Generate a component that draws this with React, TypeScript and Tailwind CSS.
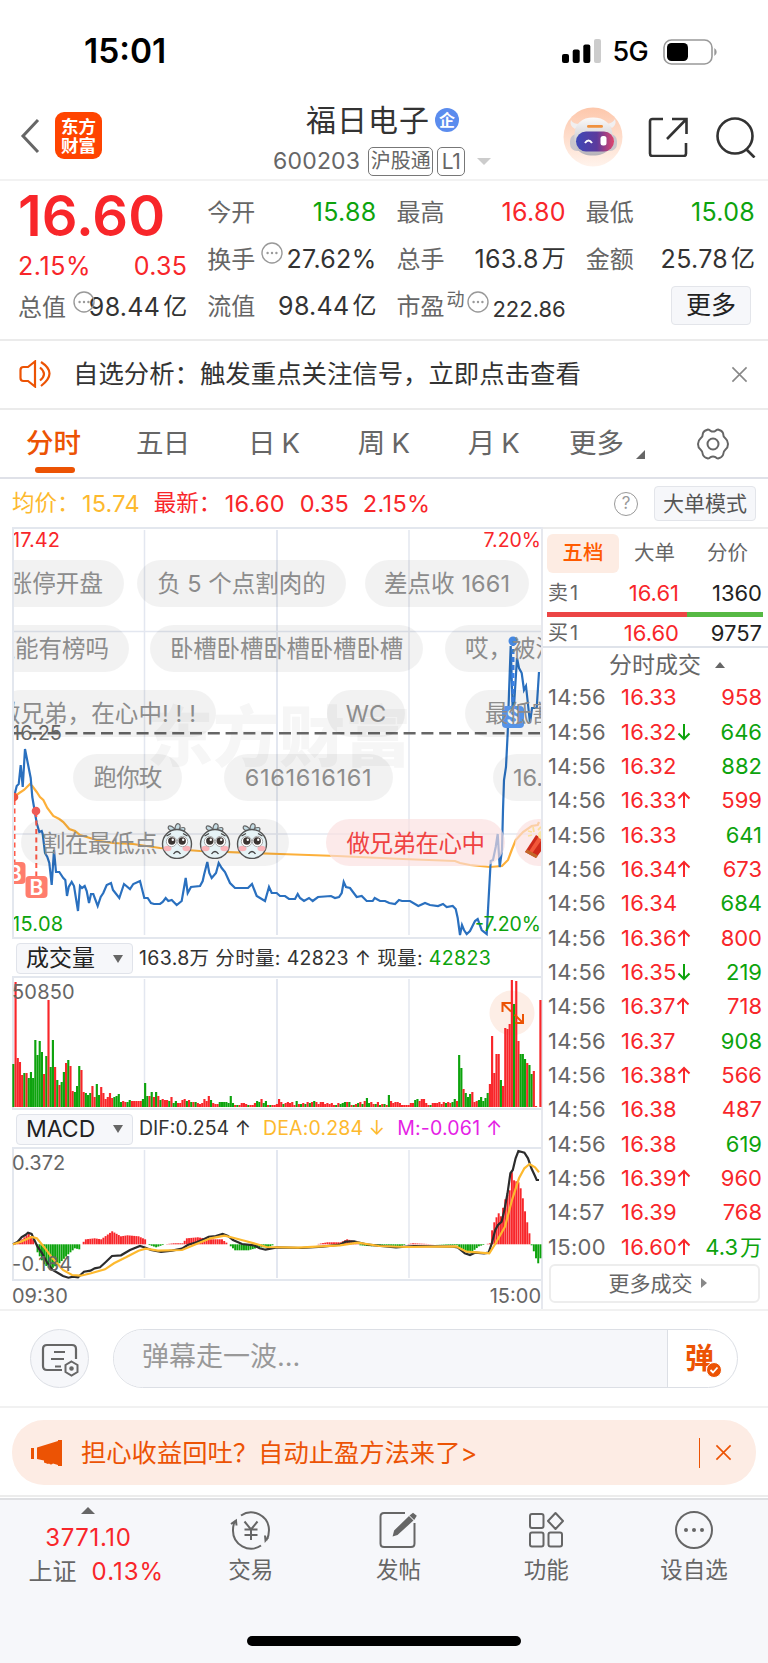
import type { ReactNode } from "react";

const tabs = ["五日", "日 K", "周 K", "月 K"];

const trades = [
  { time: "14:56", price: "16.33", dir: "", vol: "958", buy: true },
  { time: "14:56", price: "16.32", dir: "down", vol: "646", buy: false },
  { time: "14:56", price: "16.32", dir: "", vol: "882", buy: false },
  { time: "14:56", price: "16.33", dir: "up", vol: "599", buy: true },
  { time: "14:56", price: "16.33", dir: "", vol: "641", buy: false },
  { time: "14:56", price: "16.34", dir: "up", vol: "673", buy: true },
  { time: "14:56", price: "16.34", dir: "", vol: "684", buy: false },
  { time: "14:56", price: "16.36", dir: "up", vol: "800", buy: true },
  { time: "14:56", price: "16.35", dir: "down", vol: "219", buy: false },
  { time: "14:56", price: "16.37", dir: "up", vol: "718", buy: true },
  { time: "14:56", price: "16.37", dir: "", vol: "908", buy: false },
  { time: "14:56", price: "16.38", dir: "up", vol: "566", buy: true },
  { time: "14:56", price: "16.38", dir: "", vol: "487", buy: true },
  { time: "14:56", price: "16.38", dir: "", vol: "619", buy: false },
  { time: "14:56", price: "16.39", dir: "up", vol: "960", buy: true },
  { time: "14:57", price: "16.39", dir: "", vol: "768", buy: true },
  { time: "15:00", price: "16.60", dir: "up", vol: "4.3", unit: "万", buy: false },
];

const priceLine =
  "14,797 16.7,786 18.7,784 20.7,765 22.7,787 25,749 30.7,778 32.3,797 36.7,823 39.3,832 41.7,831 42.7,834 45,853 47.3,857 49.3,863 51.7,885 54,850 56,872 59.3,872 63.3,878 65.3,880 67,896 68.7,887 71.7,882 74,886 78,911 80,886 82,888 84.7,886 86.7,891 89,903 91,894 93.3,894 97.7,906 100.7,897 103.3,893 106.7,885 111,883 113,890 119.3,898 124,884 130,889 133.3,884 140,881 144.3,898 147.7,898 151,903 154,904 157,904 160,904 162.7,902 165.7,898 168.3,901 171.7,900 176.7,905 181.7,901 185.7,878 187.7,893 191,887 200,886 202.7,881 204,875 207.3,862 209.3,873 211.7,878 216,873 218.7,863 221.7,868 225,872 230,883 235,888 248,888 252,884 256.7,896 265,901 269,887 271.7,893 276.7,893 280,896 285,896 289,899 295,899 297.7,894 300,898 304,901 309,898 312.7,901 318,897 331,896 335,898 339,897 341.7,893 343.7,882 346,887 350,888 356.7,897 361.7,896 366.7,901 372.7,901 374.7,898 380,901 385,901 389.3,903 395,904 399,900 402,901 410,901 418.3,906 425,903 430,905 438,906 443,904 446.7,907 452.7,906 455.7,909 457.7,918 460,935 462,925 464,930 466.7,934 470,931 475,921 477.7,919 481.7,930 486.7,934 488,910 490.7,861 493,860 495.7,847 497.7,834 499.7,867 502,850 503,810 504,780 506,767 507.7,733 509,693 510.7,646 512.7,710 514,706 517,658 519,668 521.7,673 524,690 526,686 530,723 532,708 536.7,708 539,672";

const avgLine =
  "14,797 19.3,793 24,790 30,784 32.3,786 36.7,792 40,797 43.3,800 47.3,808 53.3,816 59.3,819 63.3,822 69.3,829 75,831 80,835 90,838 100,841 113,843 133,844 160,848 200,851 280,854 337,856 403,859 455,861 460,863 470,865 490,867 502,866 508,860 511.7,850 515.7,840 523,832 531.7,826 537.7,825 539,822";

// one entry per minute, positive is a red bar and negative a green one
const volumes = [
  -43, 125, 49, 45, 32, -34, 34, -29, -35, -29, -67, -52, -66, -55, 33, -51, 107, -40, -67, 40, -27, 22, -25,
  -35, 44, -47, 41, 16, -15, -21, -41, 37, 15, -14, -12, -14, 21, 10, -23, -12, 20, 14, 8, 10, 14, 9, -10, -11,
  -13, -5, 6, 5, -5, -7, 6, 6, 6, 6, 6, -8, -24, -11, 11, -15, 10, -15, 11, -7, 8, 7, 7, -6, 10, -4, -6, 4, 4,
  7, 8, -6, 7, -5, 5, -5, 4, 3, 4, 8, 6, 11, -7, 4, 3, 3, -5, -5, -5, -5, -4, -11, -4, 2, -2, 2, 4, 4, 3, -2, 2,
  2, 4, -6, -5, 8, -4, -6, 2, -2, 2, 2, 3, 8, 5, -3, 4, 5, 4, 5, 2, -6, 3, -3, 4, -3, 5, -4, 5, -6, 5, 3, 5, 5,
  3, 4, 3, 4, 2, -2, 4, -3, -4, -5, 5, -5, 2, -2, 3, -4, 5, -3, 6, -9, -4, 5, 3, -3, 5, -2, 3, -3, 2, -12, 6, 4,
  5, 5, 4, 2, 2, 2, 2, 4, 4, -7, -8, 6, 8, 8, 4, 2, -2, 4, 4, 4, 5, 3, 5, -4, 5, 4, -5, -8, 6, -52, -39, 18,
  -14, -10, -13, 15, 5, 6, -7, -10, -6, -9, -14, 23, 71, 34, 53, 53, -27, 21, 79, 78, 83, 127, -103, 126, 66,
  -53, -53, -48, 44, -42, -33, 36, 1, 0, 107,
];

const histogramPoints = [
  [0, 0], [4, 5], [7, 11], [9, 5], [10, 0], [11, -8], [14, -20], [17, -25], [21, -19], [25, -10], [28, -4],
  [30, -5], [31, 0], [33, 5], [37, 6], [40, 5], [45, 13], [49, 8], [52, 9], [57, 8], [60, 5], [61, 0], [65, -3],
  [69, 0], [73, 1], [77, 1], [79, 6], [84, 7], [90, 5], [95, 5], [98, 0], [101, -6], [107, -6], [112, -3],
  [116, -3], [119, 0], [138, 0], [143, 2], [149, 2], [152, 5], [157, 2], [158, -1], [163, -2], [169, -1],
  [176, -2], [179, 0], [182, 1], [202, -1], [204, -5], [208, -9], [212, -2], [215, 0], [217, 1], [218, 14],
  [219, 22], [220, 27], [221, 31], [222, 28], [224, 45], [226, 54], [227, 72], [228, 64], [230, 62], [231, 56],
  [232, 46], [233, 33], [234, 22], [235, 11], [236, -1], [237, -7], [238, -14], [239, -19], [240, -14],
];

const histogram = Array.from({ length: 241 }, (_, i) => {
  const next = Math.max(1, histogramPoints.findIndex(([x]) => x >= i));
  const [x0, y0] = histogramPoints[next - 1];
  const [x1, y1] = histogramPoints[next];
  return y0 + ((y1 - y0) * (i - x0)) / (x1 - x0);
});

const difLine =
  "13,1244.3 17.5,1242 21.7,1237 25.3,1235 28,1232.7 31.6,1234 34,1239.3 37.5,1246.7 42,1253 47.4,1263 52.6,1270 58,1273 63,1276 68.4,1277.7 73,1276.7 78,1277.3 84,1271.7 90.5,1270.7 94.7,1268.3 100,1267.3 105,1262.7 112,1256 121,1255.3 130,1250 140,1246 145.6,1247.7 151,1250 161,1252 172,1250.7 182,1248.7 187.7,1245 196.4,1242.3 201.7,1240.3 208.7,1236.7 215.7,1236 222.7,1234 228,1236 233,1240 242,1244 254,1245.3 259.6,1248.3 265.5,1249.7 277,1247.3 301.6,1248 322.7,1246.7 340,1244.7 345.5,1241.7 354,1241.3 368,1244.7 396,1247.3 414,1246 452.5,1246.7 457.7,1247.3 464.8,1253.3 470,1255 475,1252.7 484,1253.3 488.6,1252.7 491.8,1243.3 495.3,1230 498,1225 501.6,1221.7 504.4,1210 507.5,1193.3 510.4,1173.3 512.8,1170 515.6,1158.3 518.4,1151 524.4,1152.7 528,1158.3 531.4,1168.3 535,1176 536.7,1180 539,1180";

const deaLine =
  "13,1244.3 21,1241.7 31.6,1237 36.8,1238.3 43.8,1246.7 52.6,1258.3 63,1270 72,1275 80.7,1275.7 91,1273.3 105,1269.3 114,1263.3 126,1257.3 138.5,1250.7 145.6,1248.7 158,1250.7 182,1250 196.4,1244 210.5,1238.3 224.5,1235.7 233,1237.7 245.5,1241 266.6,1247 298,1247.7 340,1245.3 357.8,1242.7 379,1246 407,1247 456,1246.3 466.5,1251.7 477,1252.3 489.3,1253.3 494.6,1245 505,1226.7 512,1200 519,1178.3 524.4,1168.3 529.6,1164 535,1167.3 539,1172.3";

const Grid = ({ top, bottom }: { top: number; bottom: number }) => (
  <g stroke="#e3e7f0" strokeWidth="1.5">
    <path d={`M144.5 ${top}V${bottom}M409 ${top}V${bottom}`} />
    <path d={`M277 ${top}V${bottom}`} strokeWidth="2" />
  </g>
);

const DotsIcon = ({ className }: { className: string }) => (
  <svg viewBox="0 0 22 22" className={className}>
    <circle cx="11" cy="11" r="10" fill="none" stroke="#999" strokeWidth="1.4" />
    <g fill="#999">
      <circle cx="6.6" cy="11" r="1.2" />
      <circle cx="11" cy="11" r="1.2" />
      <circle cx="15.4" cy="11" r="1.2" />
    </g>
  </svg>
);

const CloseIcon = ({ className }: { className: string }) => (
  <svg viewBox="0 0 18 18" className={className} fill="none" stroke="currentColor" strokeWidth="1.7">
    <path d="M1.5 1.5l15 15M16.5 1.5l-15 15" />
  </svg>
);

const TickArrow = ({ dir }: { dir: string }) => (
  <svg
    viewBox="0 0 14 18"
    className={dir === "up" ? "h-[18px] w-3.5 text-[#f8262a]" : "h-[18px] w-3.5 rotate-180 text-[#0da30d]"}
    fill="none"
    stroke="currentColor"
    strokeWidth="2">
    <path d="M7 17V2M1.5 7.5L7 2l5.5 5.5" />
  </svg>
);

type QuoteProps = {
  label: string;
  value: string;
  unit?: string;
  color?: string;
  extra?: ReactNode;
};

const Quote = ({ label, value, unit, color = "text-[#333]", extra }: QuoteProps) => (
  <div className="flex h-[47px] items-center justify-between whitespace-nowrap">
    <span className="flex text-2xl leading-none text-[#666]">
      {label}
      {extra}
    </span>
    <span className={`flex text-[25px] leading-none tracking-[0.3px] ${color}`}>
      {value}
      {unit && <span className="ml-[3px] text-2xl leading-none tracking-normal">{unit}</span>}
    </span>
  </div>
);

const pill = "absolute flex h-[47px] items-center whitespace-nowrap rounded-full text-[23.5px] leading-none";
const grayPill = `${pill} bg-black/5 text-[#8c8c8c]`;

const SadFace = () => (
  <svg viewBox="0 0 32 36" className="h-9 w-8">
    <path d="M14 9c-6-1-8-4-6-6 2-1 4 1 6 3 0-4 2-6 4-5s1 4 0 5c3-2 6-2 6 0s-3 3-6 3z" fill="#c4dce4" stroke="#666" strokeWidth="1.2" />
    <circle cx="16" cy="21" r="14.5" fill="#e6f3f6" stroke="#555" strokeWidth="1.4" />
    <ellipse cx="6.5" cy="25.5" rx="4" ry="2.8" fill="#fbb4b9" />
    <ellipse cx="25.5" cy="25.5" rx="4" ry="2.8" fill="#fbb4b9" />
    <circle cx="10.5" cy="18.5" r="5.2" fill="#fff" stroke="#888" strokeWidth="0.7" />
    <circle cx="21.5" cy="18.5" r="5.2" fill="#fff" stroke="#888" strokeWidth="0.7" />
    <circle cx="10.8" cy="18" r="3.7" fill="#3a3431" />
    <circle cx="21.2" cy="18" r="3.7" fill="#3a3431" />
    <circle cx="11.8" cy="16.8" r="1.2" fill="#fff" />
    <circle cx="22.2" cy="16.8" r="1.2" fill="#fff" />
    <path d="M5.5 13l4.5-2.5M26.5 13L22 10.5M12.500 31q3.500-5 7 0" fill="none" stroke="#444" strokeWidth="1.3" />
  </svg>
);

const StatusBar = () => (
  <div className="flex h-[100px] items-center justify-between pl-[84px] pr-[51px] pt-[3px]">
    <span className="text-[33.5px] font-semibold leading-none text-black">15:01</span>
    <div className="flex items-center">
      <svg viewBox="0 0 39 25" className="mr-3 h-[25px] w-[39px]">
        <rect x="0" y="15" width="7" height="9" rx="2" />
        <rect x="10.7" y="10.5" width="7" height="13.5" rx="2" />
        <rect x="21.3" y="5.5" width="7" height="18.5" rx="2" />
        <rect x="32" y="0" width="7" height="24" rx="2" fill="#ccc" />
      </svg>
      <span className="mr-[15px] text-[27px] font-medium leading-none tracking-[-0.7px] text-black">5G</span>
      <svg viewBox="0 0 54 26" className="h-[26px] w-[54px]">
        <rect x="1" y="1" width="48" height="24" rx="7.5" fill="none" stroke="#999" strokeWidth="1.6" />
        <rect x="4" y="4" width="21" height="18" rx="4.5" />
        <path d="M51.3 9q2.4 1.4 2.4 4t-2.4 4z" fill="#999" />
      </svg>
    </div>
  </div>
);

const Robot = () => (
  <svg viewBox="0 0 60 60" className="h-[60px] w-[60px]">
    <defs>
      <linearGradient id="halo" x1="0" y1="0" x2="0" y2="1">
        <stop offset="0" stopColor="#fdc7ab" />
        <stop offset="1" stopColor="#fff3ec" />
      </linearGradient>
      <linearGradient id="visor" x1="0" y1="0" x2="1" y2="0">
        <stop offset="0" stopColor="#3d48b8" />
        <stop offset="0.55" stopColor="#5c3a9c" />
        <stop offset="1" stopColor="#e0446c" />
      </linearGradient>
      <linearGradient id="shell" x1="0" y1="0" x2="0" y2="1">
        <stop offset="0" stopColor="#fbfafa" />
        <stop offset="1" stopColor="#b5b2b9" />
      </linearGradient>
    </defs>
    <circle cx="30" cy="30" r="29.5" fill="url(#halo)" />
    <path d="M12 22q-6-3-4-9 2 4 8 4zM49 21q5-3 3-9-2 4-8 5z" fill="#f1eff0" />
    <rect x="7" y="27" width="47" height="17" rx="7" fill="#c9c6cc" />
    <path d="M30 10.5c-11 0-18 6-18.500 17-1 13 4 21 18.500 21s20-8 19.500-21c-.5-11-8.500-17-19.500-17z" fill="url(#shell)" />
    <rect x="24" y="18" width="16" height="2.8" rx="1.4" fill="#f0913e" />
    <rect x="13" y="24.5" width="38" height="20" rx="10" fill="url(#visor)" />
    <path d="M22 36q3.500-5 7 0" fill="none" stroke="#fff" strokeWidth="2" />
    <rect x="37.5" y="29" width="6" height="9.5" rx="2.5" fill="#fff" />
  </svg>
);

const Header = () => (
  <div className="flex h-[81px] items-center border-b-2 border-[#f2f2f2] pl-5 pr-[11px]">
    <svg viewBox="0 0 20 36" className="-mt-[7px] h-9 w-5" fill="none" stroke="#666" strokeWidth="3">
      <path d="M18 2L3 18l15 16" />
    </svg>
    <div className="-mt-2 ml-[15px] flex h-[47px] w-[47px] flex-col items-center justify-center rounded-[9px] bg-[#ff4400] text-[17.5px] font-bold leading-[19px] text-white">
      <span>东方</span>
      <span>财富</span>
    </div>
    <div className="ml-[171px] w-[218px]">
      <div className="-mt-[3px] flex items-center pl-[33px]">
        <span className="text-[30px] leading-[38px] tracking-[1px] text-[#333]">福日电子</span>
        <span className="ml-[5px] flex h-6 w-6 items-center justify-center rounded-full bg-[#5b8cee] text-[16px] font-bold leading-none text-white">
          企
        </span>
      </div>
      <div className="mt-2 flex items-center text-[#666]">
        <span className="text-[23px] leading-none tracking-[0.2px]">600203</span>
        <span className="ml-2 flex h-[29px] w-[65px] items-center justify-center rounded-[5px] border-[1.5px] border-[#777] text-[20px] leading-none">
          沪股通
        </span>
        <span className="ml-1 flex h-[29px] w-7 items-center justify-center rounded-[5px] border-[1.5px] border-[#777] text-[21px] leading-none tracking-[-0.5px]">
          L1
        </span>
        <span className="ml-3 border-x-[7px] border-t-[7px] border-x-transparent border-t-[#ccc]" />
      </div>
    </div>
    <div className="-mt-1.5 ml-auto flex items-center">
      <Robot />
      <svg viewBox="0 0 40 40" className="ml-[25px] h-10 w-10" fill="none" stroke="#333" strokeWidth="2.6">
        <path d="M15 2H4.500Q2 2 2 4.500v32Q2 39 4.500 39h31q2.500 0 2.500-2.500V26M24 2h14.500v15M38 2.500L19 22" />
      </svg>
      <svg viewBox="0 0 42 42" className="ml-[27px] h-[42px] w-[42px]" fill="none" stroke="#333" strokeWidth="2.6">
        <circle cx="20" cy="20" r="17.5" />
        <path d="M31.500 33.500l8 8" />
      </svg>
    </div>
  </div>
);

const Quotes = () => (
  <div className="grid h-[160px] grid-cols-4 gap-x-5 border-b-2 border-[#ebebeb] pl-[18px] pr-[13px] pt-2">
    <div>
      <div className="flex h-[54px] items-center text-[56px] font-semibold leading-none tracking-[0.1px] text-[#f8262a]">16.60</div>
      <div className="flex h-[47px] items-center justify-between text-[25px] leading-none text-[#f8262a]">
        <span className="tracking-[0.6px]">2.15%</span>
        <span className="tracking-[0.3px]">0.35</span>
      </div>
      <div className="relative -mt-1.5">
        <DotsIcon className="absolute left-[55px] top-[7px] h-[22px] w-[22px]" />
        <Quote label="总值" value="98.44" unit="亿" />
      </div>
    </div>
    <div>
      <Quote label="今开" value="15.88" color="text-[#0da30d]" />
      <Quote label="换手" value="27.62%" extra={<DotsIcon className="-mt-1.5 ml-1.5 h-[22px] w-[22px]" />} />
      <Quote label="流值" value="98.44" unit="亿" />
    </div>
    <div>
      <Quote label="最高" value="16.80" color="text-[#f8262a]" />
      <Quote label="总手" value="163.8" unit="万" />
      <div className="flex h-[47px] items-center justify-between text-[#333]">
        <span className="flex text-2xl leading-none text-[#666]">
          市盈
          <span className="-mt-1 ml-0.5 text-[18px] leading-none">动</span>
          <DotsIcon className="-mt-1 ml-0.5 h-[22px] w-[22px]" />
        </span>
        <span className="mt-1 text-[22px] leading-none">222.86</span>
      </div>
    </div>
    <div>
      <Quote label="最低" value="15.08" color="text-[#0da30d]" />
      <Quote label="金额" value="25.78" unit="亿" />
      <div className="flex h-[45px] items-center justify-end pr-1">
        <span className="flex h-[39px] w-20 items-center justify-center rounded border-[1.5px] border-[#e3e5ea] bg-[#f6f7fa] text-[25px] leading-none text-[#222]">
          更多
        </span>
      </div>
    </div>
  </div>
);

const Notice = () => (
  <div className="flex h-[69px] items-center border-b-2 border-[#ebebeb] pb-px pl-[19px] pr-5">
    <svg viewBox="0 0 34 28" className="h-7 w-[34px]" fill="none" stroke="#ec5304" strokeWidth="2.2">
      <path d="M16 1.500v25l-7-5.500H4.500Q1.500 21 1.500 18v-8Q1.500 7 4.500 7H9zM21 7.500q8 6.500 0 13M22 2q17 11 0 24" />
    </svg>
    <span className="ml-5 text-[25.4px] leading-none text-[#333]">自选分析：触发重点关注信号，立即点击查看</span>
    <CloseIcon className="ml-auto h-[17px] w-[17px] text-[#888]" />
  </div>
);

const TabBar = () => (
  <div className="flex h-[69px] items-center border-b-2 border-[#dfe1e8] pl-[26px] pt-px text-[27.5px] leading-none text-[#666]">
    <div className="relative font-medium text-[#ec5304]">
      分时
      <span className="absolute -bottom-[15px] left-[9px] h-1.5 w-10 rounded-full bg-[#ec5304]" />
    </div>
    <div className="ml-[55px] flex w-[383px] justify-between">
      {tabs.map((tab) => (
        <span key={tab} className="whitespace-nowrap tracking-[-0.8px]">
          {tab}
        </span>
      ))}
    </div>
    <span className="ml-[50px]">更多</span>
    <span className="ml-3 mt-5 border-b-[9px] border-l-[9px] border-b-[#666] border-l-transparent" />
    <svg viewBox="0 0 34 34" className="ml-[51px] h-[34px] w-[34px]" fill="none" stroke="#666" strokeWidth="2">
      <circle cx="17" cy="17" r="5.5" />
      <path
        d="M12 2.500q1.500 0 2.500 1.300 2.500 1.400 5 0Q20.500 2.500 22 2.500q4 1 5 3.500 0 3.500 2.500 5.500Q32 13.500 32 17t-2.500 5.500Q27 24.500 27 28q-1 2.500-5 3.500-1.500 0-2.500-1.300-2.500-1.400-5 0-1 1.300-2.500 1.300-4-1-5-3.500 0-3.500-2.500-5.500Q2 20.500 2 17t2.500-5.500Q7 9.500 7 6q1-2.500 5-3.500z"
        strokeLinejoin="round"
      />
    </svg>
  </div>
);

const PriceSummary = () => (
  <div className="flex h-12 items-center whitespace-nowrap px-3 pt-px text-[22.5px] leading-none text-[#f8262a]">
    <span className="flex items-center text-[#fdb92e]">
      <span className="w-[70px]">均价：</span>
      <span className="text-[23.5px] tracking-[0.2px]">15.74</span>
    </span>
    <span className="ml-3.5 w-[71px]">最新：</span>
    <span className="text-[23.5px] tracking-[0.2px]">16.60</span>
    <span className="ml-[15px] text-[23.5px]">0.35</span>
    <span className="ml-3.5 text-[23.5px] tracking-[0.3px]">2.15%</span>
    <span className="ml-auto flex h-6 w-6 items-center justify-center rounded-full border-[1.5px] border-[#999] text-[17px] text-[#999]">?</span>
    <span className="ml-4 flex h-[35px] w-[102px] items-center justify-center rounded border-[1.5px] border-[#e3e5ea] bg-[#f6f7fa] text-[21px] text-[#555]">
      大单模式
    </span>
  </div>
);

const PriceChart = () => (
  <div className="relative h-[412px] overflow-hidden border-b-2 border-l-2 border-t-2 border-[#e3e7ee]">
    <svg viewBox="14 529 528 408" className="absolute left-0 top-0 h-[408px] w-[528px] max-w-none">
      <text x="147" y="761" fontSize="66" fontWeight="900" fill="#f6f6f6">
        东方财富
      </text>
      <Grid top={530} bottom={935} />
      <path d="M12 631.500H542M12 834H542" stroke="#e3e7f0" strokeWidth="1.5" />
      <path d="M12 733.300H540" stroke="#666" strokeWidth="2.4" strokeDasharray="12 5.8" />
      <polyline points={avgLine} fill="none" stroke="#fdb03a" strokeWidth="2.2" />
      <polyline points={priceLine} fill="none" stroke="#2a70bf" strokeWidth="2.2" />
      <g stroke="#ff5a48" strokeWidth="2" strokeDasharray="5 3.5">
        <path d="M14.500 800V862M36.300 812V876" />
      </g>
      <circle cx="14" cy="797" r="4.3" fill="#f0563f" />
      <circle cx="36" cy="811" r="4.3" fill="#ef5b57" />
      <rect x="3.5" y="862" width="22" height="22" rx="4" fill="#ff7d6d" />
      <rect x="25.5" y="876" width="22" height="22" rx="4" fill="#ff7d6d" />
      <g fill="#fff" fontSize="21" fontWeight="600" textAnchor="middle">
        <text x="15" y="880.5">B</text>
        <text x="36.5" y="894.5">B</text>
      </g>
      <path d="M513 641V706" stroke="#3b82e6" strokeWidth="3" strokeDasharray="5 3" />
      <circle cx="513" cy="641" r="4.5" fill="#4a90ee" />
      <rect x="502" y="706" width="22" height="22" rx="4" fill="#5a9bf5" />
      <text x="513" y="724" fill="#fff" fontSize="20" fontWeight="600" textAnchor="middle">
        S
      </text>
    </svg>

    <span className={`${grayPill} right-[417px] top-[31px] pr-[21px] tracking-[0.1px]`}>打涨停开盘</span>
    <span className={`${grayPill} left-[123px] top-[31px] w-[209px] justify-center`}>负 5 个点割肉的</span>
    <span className={`${grayPill} left-[351px] top-[31px] w-[164px] justify-center tracking-[0.1px]`}>差点收 1661</span>

    <span className={`${grayPill} right-[412px] top-24 pr-5`}>还能有榜吗</span>
    <span className={`${grayPill} left-[136px] top-24 w-[273px] justify-center tracking-[-0.2px]`}>卧槽卧槽卧槽卧槽卧槽</span>
    <span className={`${grayPill} left-[431px] top-24 px-5`}>哎，被没了</span>

    <span className={`${grayPill} right-[325px] top-[161px] pr-5 tracking-[0.1px]`}>做兄弟，在心中! ! !</span>
    <span className={`${grayPill} left-[313px] top-[161px] w-[78px] justify-center`}>WC</span>
    <span className={`${grayPill} left-[451px] top-[161px] px-5`}>最低割了</span>

    <span className={`${grayPill} left-[59px] top-[225px] w-[109px] justify-center tracking-[-0.8px]`}>跑你玫</span>
    <span className={`${grayPill} left-[210px] top-[225px] w-[169px] justify-center tracking-[0.7px]`}>6161616161</span>
    <span className={`${grayPill} left-[479px] top-[225px] px-5`}>16.60</span>

    <span className={`${grayPill} left-[7px] top-[290px] w-[268px] pl-[21px] pt-0.5 tracking-[-0.5px]`}>
      割在最低点
      <span className="-mt-1.5 ml-1 flex gap-[5.5px]">
        <SadFace />
        <SadFace />
        <SadFace />
      </span>
    </span>
    <span className={`${pill} left-[312px] top-[290px] w-[179px] justify-center bg-[#fbdede]/65 pt-0.5 tracking-[-0.5px] text-[#ef4343]`}>
      做兄弟在心中
    </span>
    <span className={`${pill} left-[501px] top-[290px] w-20 bg-[#fbdede]/65`}>
      <svg viewBox="0 0 30 40" className="ml-2 h-10 w-[30px]">
        <path d="M5 8l4 1M10 4l1 5M5 13l4-1M15 7l3-3" stroke="#fbdf9a" strokeWidth="1.8" />
        <path d="M13 12l12 7-12 16-11-6z" fill="#cf2a1a" />
        <path d="M16 13l4 2-12 17-3-2z" fill="#f2583a" />
        <path d="M4 26.500l11 6-2 2.500-11-6z" fill="#c2682a" />
        <circle cx="19" cy="12" r="4" fill="#fbe6a4" />
      </svg>
    </span>

    <span className="absolute -left-0.5 top-px text-[20px] leading-[20px] text-[#f8262a]">17.42</span>
    <span className="absolute right-0 top-px text-[19.5px] leading-[20px] text-[#f8262a]">7.20%</span>
    <span className="absolute -left-0.5 top-[194px] text-[20px] leading-[20px] text-[#666]">16.25</span>
    <span className="absolute -left-0.5 bottom-[3px] text-[20px] leading-[20px] tracking-[0.3px] text-[#0da30d]">15.08</span>
    <span className="absolute bottom-[3px] right-0 text-[19.5px] leading-[20px] text-[#0da30d]">-7.20%</span>
  </div>
);

const IndicatorSelect = ({ name }: { name: string }) => (
  <span className="ml-1 mr-1.5 flex h-[31px] w-[117px] items-center justify-between rounded border-[1.5px] border-[#e0e3ea] bg-[#f6f7fa] pl-[9px] pr-[9px] text-[23px] leading-none tracking-normal text-[#222]">
    {name}
    <span className="border-x-[5px] border-t-8 border-x-transparent border-t-[#666]" />
  </span>
);

const VolumeChart = () => (
  <>
    <div className="flex h-[37px] items-center whitespace-nowrap pt-0.5 text-[19.5px] leading-none tracking-[0.35px] text-[#333]">
      <IndicatorSelect name="成交量" />
      <span>163.8万 分时量: 42823 ↑ 现量:</span>
      <span className="ml-1.5 text-[#0da30d]">42823</span>
    </div>
    <div className="relative h-[134px] border-y-2 border-l-2 border-[#e3e7ee]">
      <svg viewBox="14 978 528 130" className="h-[130px] w-[528px] max-w-none overflow-visible">
        <Grid top={979} bottom={1107} />
        <circle cx="512" cy="1013" r="22.5" fill="#fdeee6" />
        {volumes.map((v, i) => (
          <rect
            key={i}
            x={12.3 + i * 2.196}
            y={1107 - Math.abs(v)}
            width="2.15"
            height={Math.abs(v)}
            fill={v > 0 ? "#f8262a" : "#0da30d"}
          />
        ))}
        <path d="M502.500 1012V1003H511M503 1003.500l8 8M515 1023h8V1014M522.500 1022.500l-8-8" fill="none" stroke="#ec5304" strokeWidth="2" />
      </svg>
      <span className="absolute -left-0.5 top-1 text-[20px] leading-[20px] tracking-[0.2px] text-[#666]">50850</span>
    </div>
  </>
);

const MacdChart = () => (
  <>
    <div className="flex h-[37px] items-center whitespace-nowrap pt-px text-[19.5px] leading-none text-[#333]">
      <IndicatorSelect name="MACD" />
      <span>DIF:0.254 ↑</span>
      <span className="ml-3 tracking-[0.15px] text-[#fdb92e]">DEA:0.284 ↓</span>
      <span className="ml-3 tracking-[0.2px] text-[#e51fe5]">M:-0.061 ↑</span>
    </div>
    <div className="relative h-[134px] border-y-2 border-l-2 border-[#e3e7ee]">
      <svg viewBox="14 1149 528 130" className="h-[130px] w-[528px] max-w-none overflow-visible">
        <Grid top={1150} bottom={1278} />
        {histogram.map((v, i) => (
          <rect
            key={i}
            x={12.4 + i * 2.196}
            y={v > 0 ? 1244.3 - v : 1244.3}
            width="1.95"
            height={Math.abs(v)}
            fill={v > 0 ? "#f8262a" : "#0da30d"}
          />
        ))}
        <polyline points={difLine} fill="none" stroke="#2c2c2c" strokeWidth="2.2" />
        <polyline points={deaLine} fill="none" stroke="#fdb92e" strokeWidth="2.2" />
      </svg>
      <span className="absolute -left-0.5 top-1 text-[20px] leading-[20px] text-[#666]">0.372</span>
      <span className="absolute -left-0.5 bottom-[5px] text-[20px] leading-[20px] tracking-[0.3px] text-[#666]">-0.184</span>
    </div>
    <div className="flex h-7 items-center justify-between pt-0.5 text-[20px] leading-none text-[#666]">
      <span>09:30</span>
      <span>15:00</span>
    </div>
  </>
);

const OrderBook = () => (
  <div className="w-[227px] border-l-2 border-[#e6e8ee] text-[#666]">
    <div className="flex h-12 items-center border-t-2 border-[#ececec] pb-0.5 pl-1 pt-1 text-[20.5px] leading-none">
      <span className="flex h-[39px] w-[72px] items-center justify-center rounded-md bg-[#fdece3] font-medium text-[#ff5a00]">五档</span>
      <span className="ml-[15px]">大单</span>
      <span className="ml-8">分价</span>
    </div>
    <div className="flex h-9 items-center pl-[5px] pr-1.5 text-[22px] leading-none">
      <span className="w-11 text-[20px] tracking-[2px]">卖1</span>
      <span className="w-[87px] text-right text-[#f8262a]">16.61</span>
      <span className="ml-auto text-[#222]">1360</span>
    </div>
    <div className="ml-1 mr-[5px] mt-px flex h-[5px] bg-[#56b944]">
      <span className="w-[140px] bg-[#ec4545]" />
    </div>
    <div className="flex h-[31px] items-center border-b-2 border-[#dfe3ea] pl-[5px] pr-1.5 pt-0.5 text-[22px] leading-none">
      <span className="w-11 text-[20px] tracking-[2px]">买1</span>
      <span className="w-[87px] text-right text-[#f8262a]">16.60</span>
      <span className="ml-auto text-[#222]">9757</span>
    </div>
    <div className="flex h-8 items-center pl-[66px] pt-0.5 text-[23px] leading-none">
      分时成交
      <span className="ml-3.5 border-x-[5.5px] border-b-[6px] border-x-transparent border-b-[#666]" />
    </div>
    {trades.map((trade, i) => (
      <div key={i} className="flex h-[34.35px] items-center pl-[5px] pr-1.5 text-[22px] leading-none">
        <span className="w-[73px] tracking-[0.3px]">{trade.time}</span>
        <span className="tracking-[0.2px] text-[#f8262a]">{trade.price}</span>
        {trade.dir && <TickArrow dir={trade.dir} />}
        <span className={trade.buy ? "ml-auto text-[#f8262a]" : "ml-auto text-[#0da30d]"}>
          {trade.vol}
          {trade.unit && <span className="ml-0.5">{trade.unit}</span>}
        </span>
      </div>
    ))}
    <div className="ml-1.5 mr-2 flex h-[39px] items-center justify-center rounded-md border-2 border-[#ededed] pl-1.5 text-[21px] leading-none">
      更多成交
      <span className="ml-2 border-y-[5.5px] border-l-[6px] border-y-transparent border-l-[#888]" />
    </div>
  </div>
);

const CommentBar = () => (
  <div className="flex h-[99px] items-center border-b-2 border-t-2 border-[#f1f1f1] px-[30px]">
    <span className="flex h-[59px] w-[59px] items-center justify-center rounded-full border-[1.5px] border-[#dcdfe5] bg-[#f6f7fa]">
      <svg viewBox="0 0 38 36" className="h-9 w-[38px]" fill="none" stroke="#666" strokeWidth="2.2">
        <path d="M21 29H6q-4 0-4-4V8q0-4 4-4h25q4 0 4 4v10M13 11h11M10 18h13M14 25.500h6" />
        <path d="M30.500 20.500l6 3.500v7l-6 3.500-6-3.500v-7z" strokeWidth="2" />
        <circle cx="30.5" cy="27.5" r="1.2" fill="#666" />
      </svg>
    </span>
    <div className="ml-6 flex h-[59px] flex-1 overflow-hidden rounded-full border-[1.5px] border-[#dcdfe5]">
      <div className="flex flex-1 items-center bg-[#f6f7fa] pb-1 pl-7 text-[27px] leading-none text-[#999]">弹幕走一波...</div>
      <div className="flex w-[70px] items-center border-l-[1.5px] border-[#dcdfe5] pl-[17px] text-[29px] font-bold leading-none text-[#ec5304]">
        弹
        <svg viewBox="0 0 16 16" className="-ml-2 mt-[22px] h-4 w-4">
          <circle cx="8" cy="8" r="7.5" fill="#ec5304" stroke="#fff" />
          <path d="M4.500 8l2.500 2.500 4.500-5" fill="none" stroke="#fff" strokeWidth="1.8" />
        </svg>
      </div>
    </div>
  </div>
);

const Promo = () => (
  <div className="mb-px h-[89px] border-b-2 border-[#ececec] px-3 pt-3">
    <div className="flex h-[65px] items-center rounded-[32px] bg-[#fdece4] pl-[19px] pr-6 text-[#ec5304]">
      <svg viewBox="0 0 32 26" className="h-[26px] w-8" fill="#ec5304">
        <path d="M0 8h3v11H0zM6 7.500L27 1V0h4v26h-4v-1l-5-1.500q-2 2-4 0l-1 .5-4-1.500v-2L6 19z" />
      </svg>
      <span className="ml-[18px] text-[25.3px] leading-none">担心收益回吐？自动止盈方法来了&gt;</span>
      <span className="ml-auto mr-[15px] h-[30px] w-[1.5px] bg-[#ec5304]" />
      <CloseIcon className="h-[17px] w-[17px]" />
    </div>
  </div>
);

const NavItem = ({ label, children }: { label: string; children: ReactNode }) => (
  <div className="flex w-[148px] flex-col items-center pt-2.5">
    <svg viewBox="0 0 42 40" className="h-10 w-[42px]" fill="none" stroke="#666" strokeWidth="2">
      {children}
    </svg>
    <span className="mt-[9px] text-[22.5px] leading-[22px] text-[#666]">{label}</span>
  </div>
);

const BottomNav = () => (
  <div className="h-[165px] border-t-2 border-[#dfe0e3] bg-[#f6f7fa]">
    <div className="flex h-[136px]">
      <div className="flex w-[177px] flex-col items-center pt-[7px]">
        <span className="border-x-[7px] border-b-[7px] border-x-transparent border-b-[#666]" />
        <span className="mt-3 text-[24px] leading-[24px] tracking-[0.6px] text-[#f8262a]">3771.10</span>
        <span className="mt-2.5 flex items-center pl-4 text-[24px] leading-[24px] text-[#666]">
          上证<span className="ml-[15px] tracking-[1px] text-[#f8262a]">0.13%</span>
        </span>
      </div>
      <NavItem label="交易">
        <path d="M11 5.500A18 18 0 0 1 39 20q0 6-2.500 10M38.500 27l-3 3.500-.5-5M31 35.500A18 18 0 0 1 3 20q0-5 2-9M1 14l5-3.500.5 5M14.500 11.500l6.500 8 6.500-8M21 19.500V30M14.500 19.500h13M14.500 25h13" />
      </NavItem>
      <NavItem label="发帖">
        <path d="M28 3H7Q3.500 3 3.500 6.500v27Q3.500 37 7 37h27q3.500 0 3.500-3.500V13" />
        <path d="M17 25l1-4L32 7.500l3 3L20 24z" fill="#666" />
        <path d="M34 5.500l3 3 1.500-2.500-2.500-2z" fill="#666" />
      </NavItem>
      <NavItem label="功能">
        <rect x="5" y="4" width="13.5" height="14" rx="2" />
        <rect x="5" y="22.5" width="13.5" height="14" rx="2" />
        <rect x="23.5" y="22.5" width="13.5" height="14" rx="2" />
        <path d="M30.500 3l7.500 8-7.500 8-7.500-8z" strokeLinejoin="round" />
      </NavItem>
      <NavItem label="设自选">
        <circle cx="21" cy="20" r="18" />
        <g fill="#666" stroke="none">
          <circle cx="13" cy="20" r="2" />
          <circle cx="21" cy="20" r="2" />
          <circle cx="29" cy="20" r="2" />
        </g>
      </NavItem>
    </div>
    <div className="mx-auto h-2.5 w-[274px] rounded-full bg-black" />
  </div>
);

const App = () => {
  return (
    <div className="h-[1663px] w-[768px] overflow-hidden bg-white font-['Inter','Noto_Sans_CJK_SC',sans-serif]">
      <StatusBar />
      <Header />
      <Quotes />
      <Notice />
      <TabBar />
      <PriceSummary />
      <div className="flex h-[782px] pl-3">
        <div className="w-[529px]">
          <PriceChart />
          <VolumeChart />
          <MacdChart />
        </div>
        <OrderBook />
      </div>
      <CommentBar />
      <Promo />
      <BottomNav />
    </div>
  );
};

export default App;
